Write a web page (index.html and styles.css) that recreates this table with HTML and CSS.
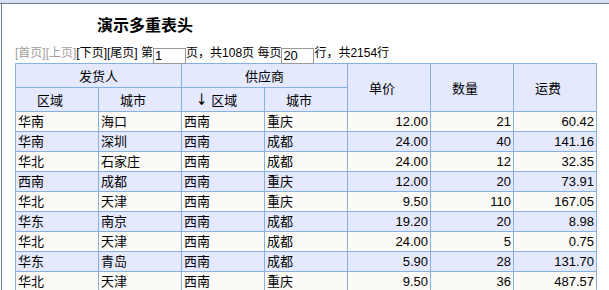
FILE: index.html
```html
<!DOCTYPE html>
<html>
<head>
<meta charset="utf-8">
<link rel="stylesheet" href="styles.css">
</head>
<body>
<div class="topstrip"></div>
<div class="frame">
  <h1 class="title">演示多重表头</h1>
  <div class="pager">
    <span class="off">[首页][上页]</span><span class="on">[下页][尾页]</span> 第<input class="box" value="1">页，共108页 每页<input class="box" value="20">行，共2154行
  </div>
  <table class="grid">
    <colgroup>
      <col><col><col><col><col><col><col>
    </colgroup>
    <thead>
      <tr class="h1">
        <th colspan="2">发货人</th>
        <th colspan="2">供应商</th>
        <th rowspan="2" class="leaf">单价</th>
        <th rowspan="2" class="leaf">数量</th>
        <th rowspan="2" class="leaf">运费</th>
      </tr>
      <tr class="h2">
        <th class="leaf">区域</th>
        <th class="leaf">城市</th>
        <th class="leaf"><span class="arrow">↓</span>区域</th>
        <th class="leaf">城市</th>
      </tr>
    </thead>
    <tbody>
      <tr><td>华南</td><td>海口</td><td>西南</td><td>重庆</td><td class="n">12.00</td><td class="n">21</td><td class="n">60.42</td></tr>
      <tr><td>华南</td><td>深圳</td><td>西南</td><td>成都</td><td class="n">24.00</td><td class="n">40</td><td class="n">141.16</td></tr>
      <tr><td>华北</td><td>石家庄</td><td>西南</td><td>成都</td><td class="n">24.00</td><td class="n">12</td><td class="n">32.35</td></tr>
      <tr><td>西南</td><td>成都</td><td>西南</td><td>重庆</td><td class="n">12.00</td><td class="n">20</td><td class="n">73.91</td></tr>
      <tr><td>华北</td><td>天津</td><td>西南</td><td>重庆</td><td class="n">9.50</td><td class="n">110</td><td class="n">167.05</td></tr>
      <tr><td>华东</td><td>南京</td><td>西南</td><td>成都</td><td class="n">19.20</td><td class="n">20</td><td class="n">8.98</td></tr>
      <tr><td>华北</td><td>天津</td><td>西南</td><td>成都</td><td class="n">24.00</td><td class="n">5</td><td class="n">0.75</td></tr>
      <tr><td>华东</td><td>青岛</td><td>西南</td><td>成都</td><td class="n">5.90</td><td class="n">28</td><td class="n">131.70</td></tr>
      <tr><td>华北</td><td>天津</td><td>西南</td><td>重庆</td><td class="n">9.50</td><td class="n">36</td><td class="n">487.57</td></tr>
    </tbody>
  </table>
</div>
</body>
</html>
```

FILE: styles.css
```css
html, body {
  margin: 0;
  padding: 0;
  background: #ffffff;
  overflow: hidden;
}
body {
  font-family: "Liberation Sans", Arial, "Noto Sans CJK SC", sans-serif;
  color: #000;
}
.topstrip {
  height: 3px;
  background: #d6e2f3;
  border-bottom: 1px solid #6b7b90;
}
.frame {
  margin-left: 1px;
  border-left: 1px solid #6b7b90;
  padding-left: 13px;
  height: 400px;
}
.title {
  margin: 0;
  padding: 7px 0 0 82px;
  height: 26px;
  font-size: 16px;
  font-weight: bold;
  line-height: 26px;
  font-family: "Noto Sans CJK SC", sans-serif;
}
.pager {
  margin-top: 7px;
  font-size: 12px;
  line-height: 18px;
  height: 19px;
  white-space: nowrap;
}
.off { color: #a0a0a0; }
.on { color: #000; }
.box {
  width: 29px;
  height: 14px;
  padding: 0 1px;
  margin: 0;
  border: 1px solid #999;
  font-family: "Liberation Sans", Arial, sans-serif;
  font-size: 13px;
  line-height: 14px;
  vertical-align: -3px;
}
.grid {
  border-collapse: collapse;
  table-layout: fixed;
  width: 582px;
  font-size: 13px;
  margin-top: 0;
}
.grid col { width: 83px; }
.grid th, .grid td {
  border: 1px solid #86b2e3;
  padding: 0 2px;
  overflow: hidden;
  white-space: nowrap;
}
.grid th {
  background: #e4e9fd;
  font-weight: normal;
  text-align: center;
  height: 23px;
}
.grid th.leaf { padding-right: 16px; }
.grid td {
  height: 19px;
  line-height: 17px;
  text-align: left;
  background: #fbfaf6;
}
.grid tbody tr:nth-child(even) td { background: #e4e9fd; }
.grid td.n { text-align: right; }
.arrow {
  font-family: "DejaVu Sans", sans-serif;
  font-size: 16px;
  line-height: 14px;
  margin-right: 3px;
  display: inline-block;
  transform: scaleX(0.8);
}
```
